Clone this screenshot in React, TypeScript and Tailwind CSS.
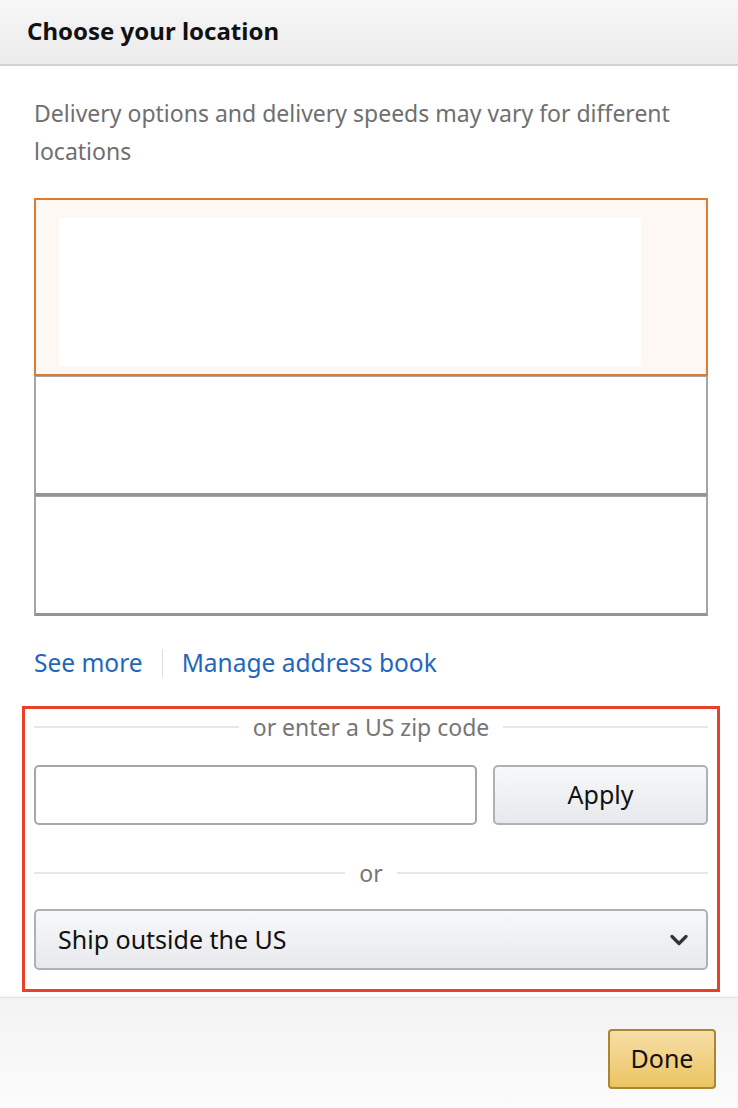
import React from "react";

const font = { fontFamily: '"Noto Sans", "Open Sans", Arial, sans-serif' };

function Divider({ label, className }: { label: string; className?: string }) {
  return (
    <div className={`flex items-center ${className ?? ""}`}>
      <div className="h-[2px] flex-1 bg-[#e7e7e7]" />
      <span className="px-[14px] text-[23px] leading-[26px] text-[#767676]">{label}</span>
      <div className="h-[2px] flex-1 bg-[#e7e7e7]" />
    </div>
  );
}

export default function App() {
  return (
    <div className="flex min-h-[1108px] w-[738px] flex-col bg-white" style={font}>
      <div className="flex h-[66px] items-center border-b-2 border-[#d2d2d2] bg-gradient-to-b from-[#f7f7f7] to-[#ebebeb] px-[27px] pb-[3px]">
        <h1 className="text-[24px] font-bold leading-[30px] text-[#111]">Choose your location</h1>
      </div>

      <div className="pl-[34px] pr-[30px] pt-[28px]">
        <p className="text-[23px] leading-[38px] text-[#6f6f6f]">
          Delivery options and delivery speeds may vary for different locations
        </p>

        <div className="mt-[28px]">
          <div className="h-[178px] border-2 border-[#de7b2e] bg-[#fdf8f4] pl-[23px] pt-[18px]">
            <div className="h-[148px] w-[582px] bg-white" />
          </div>
          <div className="h-[120px] border-x-2 border-b-[3px] border-t border-[#a3a5a9] border-b-[#939497] bg-white" />
          <div className="h-[120px] border-x-2 border-b-[3px] border-t border-[#a3a5a9] border-b-[#939497] bg-white" />
        </div>

        <div className="mt-[32px] flex items-center text-[24.5px] leading-[30px] text-[#1f66bc]">
          <span>See more</span>
          <span className="mx-[19px] h-[28px] w-px bg-[#dddddd]" />
          <span>Manage address book</span>
        </div>

        <div className="-ml-[12px] -mr-[12px] mt-[28px] border-[3px] border-[#ea402a] px-[9px] pb-[19px] pt-[5px]">
          <Divider label="or enter a US zip code" />

          <div className="mt-[25px] flex gap-[16px]">
            <div className="h-[60px] flex-1 rounded-[5px] border-2 border-[#a6a6a6] bg-white" />
            <button className="h-[60px] w-[215px] rounded-[5px] border-2 border-[#adb1b8] bg-gradient-to-b from-[#f7f8fa] to-[#e7e9ec] text-[25px] text-[#111]">
              Apply
            </button>
          </div>

          <Divider label="or" className="mt-[35px]" />

          <div className="mt-[23px] flex h-[61px] items-center justify-between rounded-[5px] border-2 border-[#adb1b8] bg-gradient-to-b from-[#f7f8fa] to-[#e7e9ec] pl-[22px] pr-[18px]">
            <span className="text-[25px] text-[#111]">Ship outside the US</span>
            <svg width="18" height="12" viewBox="0 0 18 12" fill="none">
              <path d="M2 2.5 L9 9.5 L16 2.5" stroke="#333" strokeWidth="3.2" strokeLinecap="round" strokeLinejoin="round" />
            </svg>
          </div>
        </div>
      </div>

      <div className="mt-[5px] flex flex-1 items-start justify-end border-t border-[#e3e3e3] bg-gradient-to-b from-[#f3f3f3] to-[#fbfbfb] pr-[22px] pt-[31px] shadow-[0_-1px_3px_rgba(0,0,0,0.06)]">
        <button className="h-[60px] w-[108px] rounded-[4px] border-2 border-[#a88734] bg-gradient-to-b from-[#f6dea6] to-[#ecc460] text-[25px] text-[#111]">
          Done
        </button>
      </div>
    </div>
  );
}
